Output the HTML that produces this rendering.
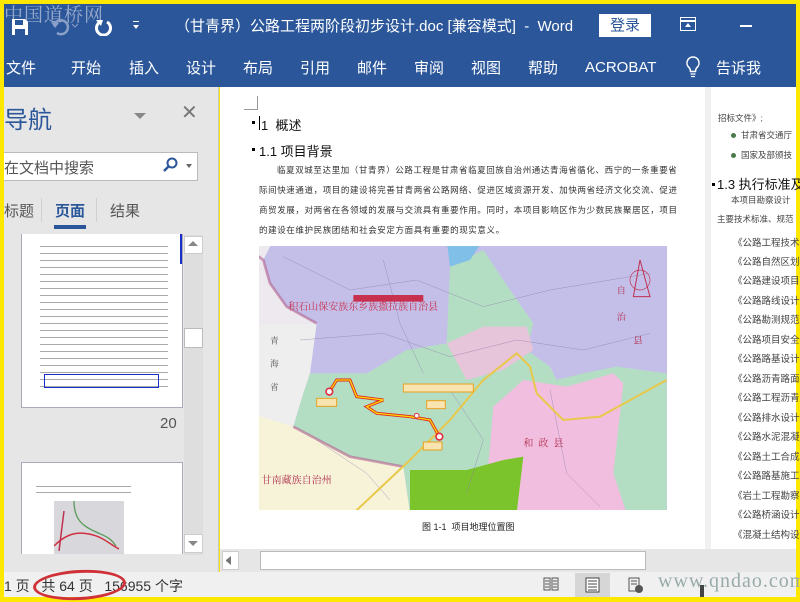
<!DOCTYPE html>
<html><head><meta charset="utf-8"><style>
*{margin:0;padding:0;box-sizing:border-box}
body{width:800px;height:600px;overflow:hidden;background:#ffe800;font-family:"Liberation Sans","Noto Sans CJK SC",sans-serif;position:relative}
.a{position:absolute}
.tab{position:absolute;top:57px;color:#fff;font-size:15px}
.t{position:absolute;font-size:8.5px;color:#333;white-space:nowrap;letter-spacing:0.6px}
.r{position:absolute;left:733px;font-size:9.5px;color:#444;white-space:nowrap}
</style></head><body>
<div class="a" style="left:4px;top:4px;width:792px;height:83px;background:#2b579a"></div>
<div class="a" style="left:4px;top:0;color:#c8cde0;opacity:.7;font-size:19px;font-family:'Liberation Serif','Noto Serif CJK SC',serif;letter-spacing:1px">中国道桥网</div>
<svg class="a" style="left:10px;top:17px" width="20" height="20" viewBox="0 0 20 20"><path d="M2 2h13l3 3v13H2z" fill="#fff"/><rect x="5" y="3" width="8" height="5" fill="#2b579a"/><rect x="5" y="12" width="10" height="6" fill="#2b579a"/></svg>
<svg class="a" style="left:50px;top:18px" width="30" height="18"><path d="M4 8a7 7 0 1 1 3 7" stroke="#8aa0c8" stroke-width="2.5" fill="none"/><path d="M1 4l4 6 4-5z" fill="#8aa0c8"/><path d="M22 6l3 3 3-3" stroke="#8aa0c8" fill="none"/></svg>
<svg class="a" style="left:93px;top:16px" width="20" height="20"><path d="M14 6a7 7 0 1 1-7 0" stroke="#fff" stroke-width="3" fill="none"/><path d="M3 4l7 0-2 6z" fill="#fff"/></svg>
<div class="a" style="left:133px;top:21px;width:6px;height:1px;background:#fff"></div>
<div class="a" style="left:133px;top:25px;border:3px solid transparent;border-top:4px solid #fff"></div>
<div class="a" style="left:175px;top:15px;color:#fff;font-size:15px;white-space:nowrap">（甘青界）公路工程两阶段初步设计.doc [兼容模式] &nbsp;- &nbsp;Word</div>
<div class="a" style="left:599px;top:14px;width:52px;height:23px;background:#fff;color:#2b579a;font-size:15px;text-align:center;line-height:23px">登录</div>
<div class="a" style="left:680px;top:17px;width:16px;height:14px;border:1.5px solid #fff"></div>
<div class="a" style="left:680px;top:20px;width:16px;height:1.5px;background:#fff"></div>
<div class="a" style="left:685px;top:23px;border:3px solid transparent;border-bottom:4px solid #fff;border-top:0"></div>
<div class="a" style="left:740px;top:25px;width:12px;height:1.5px;background:#fff"></div>
<div class="tab" style="left:6px">文件</div>
<div class="tab" style="left:71px">开始</div>
<div class="tab" style="left:129px">插入</div>
<div class="tab" style="left:186px">设计</div>
<div class="tab" style="left:243px">布局</div>
<div class="tab" style="left:300px">引用</div>
<div class="tab" style="left:357px">邮件</div>
<div class="tab" style="left:414px">审阅</div>
<div class="tab" style="left:471px">视图</div>
<div class="tab" style="left:528px">帮助</div>
<div class="tab" style="left:585px;top:59px">ACROBAT</div>
<svg class="a" style="left:684px;top:55px" width="18" height="24"><path d="M9 2a6 6 0 0 0-4 10.5c1 1 1.5 2 1.5 4h5c0-2 .5-3 1.5-4A6 6 0 0 0 9 2z" stroke="#fff" stroke-width="1.5" fill="none"/><path d="M6.5 19h5M7 21.5h4" stroke="#fff" stroke-width="1.3"/></svg>
<div class="tab" style="left:716px">告诉我</div>
<div class="a" style="left:4px;top:87px;width:215px;height:485px;background:#e6e6e6;border-right:1px solid #c8c8c8"></div>
<div class="a" style="left:4px;top:100px;font-size:24px;color:#2b579a">导航</div>
<div class="a" style="left:134px;top:113px;border:6px solid transparent;border-top:6px solid #888"></div>
<div class="a" style="left:181px;top:100px;font-size:20px;color:#777">✕</div>
<div class="a" style="left:4px;top:152px;width:194px;height:29px;background:#fff;border:1px solid #bbb;border-left:0"></div>
<div class="a" style="left:4px;top:157px;font-size:15px;color:#555">在文档中搜索</div>
<svg class="a" style="left:162px;top:157px" width="16" height="16"><circle cx="10" cy="6" r="4.5" stroke="#2b579a" stroke-width="2" fill="none"/><path d="M7 9l-5 5" stroke="#2b579a" stroke-width="2.5"/></svg>
<div class="a" style="left:186px;top:164px;border:3.5px solid transparent;border-top:4px solid #666"></div>
<div class="a" style="left:4px;top:200px;font-size:15px;color:#555">标题</div>
<div class="a" style="left:41px;top:198px;width:1px;height:24px;background:#d0d0d0"></div>
<div class="a" style="left:55px;top:200px;font-size:15px;color:#2b579a;font-weight:bold">页面</div>
<div class="a" style="left:54px;top:225px;width:32px;height:4px;background:#2b579a"></div>
<div class="a" style="left:96px;top:198px;width:1px;height:24px;background:#d0d0d0"></div>
<div class="a" style="left:110px;top:200px;font-size:15px;color:#555">结果</div>
<div class="a" style="left:21px;top:234px;width:162px;height:174px;background:#fff;border:1px solid #aab;border-top:0;overflow:hidden">
<div style="margin:8px 14px 0 18px;height:150px;background:repeating-linear-gradient(#fff 0 4px,#aaa 4px 5px,#fff 5px 7px)"></div>
<div class="a" style="left:22px;top:140px;width:115px;height:14px;border:1.5px solid #1a2ec8"></div>
<div class="a" style="left:158px;top:0;width:3px;height:30px;background:#1a2ec8"></div>
</div>
<div class="a" style="left:160px;top:415px;font-size:15px;color:#555">20</div>
<div class="a" style="left:21px;top:462px;width:162px;height:92px;background:#fff;border:1px solid #aab;border-bottom:0;overflow:hidden">
<div class="a" style="left:14px;top:20px;width:95px;height:12px;background:repeating-linear-gradient(#fff 0 3px,#aaa 3px 4px,#fff 4px 6px)"></div>
<div class="a" style="left:32px;top:38px;width:70px;height:54px;background:#d8d8dc"></div>
<svg class="a" style="left:32px;top:38px" width="70" height="54"><path d="M20 0c0 20 10 25 20 30s15 5 22 15" stroke="#5a9a5a" stroke-width="1.3" fill="none"/><path d="M0 45c10-10 20-15 35-12s20 10 30 15" stroke="#d03040" stroke-width="1.5" fill="none"/><path d="M10 10l-5 40" stroke="#c03050" stroke-width="1.5"/></svg>
</div>
<div class="a" style="left:184px;top:235px;width:19px;height:320px;background:#dedede"></div>
<div class="a" style="left:184px;top:236px;width:19px;height:18px;background:#fff;border:1px solid #ccc"></div>
<div class="a" style="left:188px;top:241px;border:5px solid transparent;border-bottom:5px solid #888;border-top:0"></div>
<div class="a" style="left:184px;top:328px;width:19px;height:20px;background:#fff;border:1px solid #bbb"></div>
<div class="a" style="left:184px;top:534px;width:19px;height:19px;background:#fff;border:1px solid #ccc"></div>
<div class="a" style="left:188px;top:541px;border:5px solid transparent;border-top:5px solid #888"></div>
<div class="a" style="left:220px;top:87px;width:576px;height:470px;background:#fff"></div>
<div class="a" style="left:705px;top:87px;width:6px;height:462px;background:#f0f0f0"></div>
<div class="a" style="left:244px;top:96px;width:14px;height:14px;border-right:1px solid #999;border-bottom:1px solid #999"></div>
<div class="a" style="left:252px;top:121px;width:3px;height:3px;background:#000"></div>
<div class="a" style="left:259px;top:116px;width:1px;height:14px;background:#000"></div>
<div class="a" style="left:261px;top:115px;font-size:13px;color:#111">1 &nbsp;概述</div>
<div class="a" style="left:252px;top:148px;width:3px;height:3px;background:#000"></div>
<div class="a" style="left:259px;top:141px;font-size:13px;color:#111">1.1 项目背景</div>
<div class="t" style="left:277px;top:164px">临夏双城至达里加（甘青界）公路工程是甘肃省临夏回族自治州通达青海省循化、西宁的一条重要省</div>
<div class="t" style="left:259px;top:184px">际间快速通道，项目的建设将完善甘青两省公路网络、促进区域资源开发、加快两省经济文化交流、促进</div>
<div class="t" style="left:259px;top:204px">商贸发展，对两省在各领域的发展与交流具有重要作用。同时，本项目影响区作为少数民族聚居区，项目</div>
<div class="t" style="left:259px;top:224px">的建设在维护民族团结和社会安定方面具有重要的现实意义。</div>
<svg class="a" style="left:259px;top:246px" width="408" height="264" viewBox="0 0 408 264">
<g transform="translate(-9,-6) scale(0.33333)">
<rect x="0" y="0" width="1300" height="820" fill="#c4bfe8"/>
<polygon points="0,0 70,0 40,60 60,130 110,200 200,250 0,250" fill="#ede9ee"/>
<polygon points="30,250 200,250 180,400 160,460 130,560 0,560 0,250" fill="#eeeeee"/>
<polygon points="180,400 350,400 470,330 590,310 600,80 700,30 780,150 850,250 830,330 900,380 920,420 1000,400 1100,380 1250,400 1250,820 480,820 460,680 300,650 130,560 160,460" fill="#b4dec4"/>
<polygon points="730,500 820,420 950,440 1090,400 1120,430 1090,700 1130,820 700,820 720,620" fill="#f2bedf"/>
<polygon points="590,310 700,260 830,260 850,330 760,390 650,420" fill="#e6c4da"/>
<polygon points="0,520 130,560 300,650 460,680 480,820 0,820" fill="#f7f3d8"/>
<polygon points="480,690 650,690 760,660 820,650 800,820 480,820" fill="#7cc42c"/>
<polygon points="590,0 700,0 660,60 600,80" fill="#7fbfe8"/>
<g stroke="#8a7aa8" stroke-width="1.5" fill="none" opacity=".7"><path d="M100 50 300 150 500 120 700 200 900 150 1200 100"/><path d="M150 300 400 280 600 350 800 300 1000 330 1200 280"/><path d="M600 450 700 600 650 760"/><path d="M900 450 950 700 1050 800"/><path d="M200 600 350 700 420 780"/><path d="M400 60 450 250 520 400"/></g>
<path d="M0 30 40 60 60 130 110 200 200 250 M130 560 300 650 460 680" stroke="#b06090" stroke-width="8" fill="none" opacity=".6"/>
<path d="M310 820 480 660 600 540 700 420 800 340 840 380 860 460 940 540 1050 530 1250 420" stroke="#e8c84a" stroke-width="6" fill="none"/>
<path d="M238 455 260 420 300 420 320 470 400 480 350 500 380 520 480 530 540 540 568 590" stroke="#e02020" stroke-width="9" fill="none"/>
<path d="M238 455 260 420 300 420 320 470 400 480 350 500 380 520 480 530 540 540 568 590" stroke="#ffd800" stroke-width="4" fill="none"/>
<circle cx="238" cy="455" r="10" fill="#fff" stroke="#e03040" stroke-width="5"/>
<circle cx="568" cy="590" r="10" fill="#fff" stroke="#e03040" stroke-width="5"/>
<circle cx="500" cy="527" r="7" fill="#fff" stroke="#e03040" stroke-width="3"/>
<rect x="200" y="475" width="60" height="24" fill="#f8e4b0" stroke="#e8a020" stroke-width="3"/>
<rect x="520" y="606" width="56" height="24" fill="#f8e4b0" stroke="#e8a020" stroke-width="3"/>
<rect x="530" y="482" width="56" height="24" fill="#f8e4b0" stroke="#e8a020" stroke-width="3"/>
<rect x="460" y="432" width="210" height="24" fill="#f8e4b0" stroke="#e8a020" stroke-width="3"/>
<rect x="310" y="165" width="210" height="20" fill="#c83050"/>
<text x="115" y="210" font-size="30" fill="#c83050" font-family="Liberation Serif,Noto Serif CJK SC,serif">积石山保安族东乡族撒拉族自治县</text>
<text x="35" y="730" font-size="30" fill="#b03050" font-family="Liberation Serif,Noto Serif CJK SC,serif">甘南藏族自治州</text>
<text x="60" y="310" font-size="26" fill="#555" font-family="Noto Serif CJK SC,serif">青</text>
<text x="60" y="380" font-size="26" fill="#555" font-family="Noto Serif CJK SC,serif">海</text>
<text x="60" y="450" font-size="26" fill="#555" font-family="Noto Serif CJK SC,serif">省</text>
<text x="820" y="620" font-size="30" fill="#b03050" font-family="Noto Serif CJK SC,serif">和 &nbsp;政 &nbsp;县</text>
<text x="1100" y="160" font-size="28" fill="#b03050" font-family="Noto Serif CJK SC,serif">自</text>
<text x="1100" y="240" font-size="28" fill="#b03050" font-family="Noto Serif CJK SC,serif">治</text>
<text x="1150" y="310" font-size="28" fill="#b03050" font-family="Noto Serif CJK SC,serif">县</text>
<path d="M1170 60 1150 170 1200 170z" stroke="#c03050" stroke-width="3" fill="none"/>
<circle cx="1170" cy="120" r="30" stroke="#c03050" stroke-width="2" fill="none"/>
</g></svg>
<div class="a" style="left:422px;top:520px;font-size:9px;color:#222">图 1-1 &nbsp;项目地理位置图</div>
<div class="a" style="left:252px;top:550px;width:3px;height:3px;background:#000"></div>
<div class="r" style="left:718px;top:112px;font-size:8.5px">招标文件》;</div>
<div class="a" style="left:731px;top:133px;width:5px;height:5px;border-radius:50%;background:#4a7a4a"></div>
<div class="r" style="left:741px;top:129px;font-size:8.5px">甘肃省交通厅</div>
<div class="a" style="left:731px;top:153px;width:5px;height:5px;border-radius:50%;background:#4a7a4a"></div>
<div class="r" style="left:741px;top:149px;font-size:8.5px">国家及部颁技</div>
<div class="a" style="left:712px;top:183px;width:3px;height:3px;background:#000"></div>
<div class="r" style="left:717px;top:174px;font-size:13px;color:#111">1.3 执行标准及</div>
<div class="r" style="left:731px;top:194px;font-size:8.5px">本项目勘察设计</div>
<div class="r" style="left:717px;top:213px;font-size:8.5px">主要技术标准、规范</div>
<div class="r" style="top:235px">《公路工程技术标</div>
<div class="r" style="top:254px">《公路自然区划标</div>
<div class="r" style="top:273px">《公路建设项目环</div>
<div class="r" style="top:293px">《公路路线设计规</div>
<div class="r" style="top:312px">《公路勘测规范》</div>
<div class="r" style="top:332px">《公路项目安全性</div>
<div class="r" style="top:351px">《公路路基设计规</div>
<div class="r" style="top:371px">《公路沥青路面设</div>
<div class="r" style="top:390px">《公路工程沥青及</div>
<div class="r" style="top:410px">《公路排水设计规</div>
<div class="r" style="top:429px">《公路水泥混凝土</div>
<div class="r" style="top:449px">《公路土工合成材</div>
<div class="r" style="top:468px">《公路路基施工技</div>
<div class="r" style="top:488px">《岩土工程勘察规</div>
<div class="r" style="top:507px">《公路桥涵设计通</div>
<div class="r" style="top:527px">《混凝土结构设计</div>
<div class="a" style="left:220px;top:549px;width:576px;height:23px;background:#e6e6e6"></div>
<div class="a" style="left:222px;top:551px;width:17px;height:19px;background:#fff;border:1px solid #ccc"></div>
<div class="a" style="left:226px;top:556px;border:4px solid transparent;border-right:5px solid #777;border-left:0;height:9px"></div>
<div class="a" style="left:260px;top:551px;width:386px;height:19px;background:#fff;border:1px solid #bbb"></div>
<div class="a" style="left:4px;top:572px;width:792px;height:25px;background:#f0f0f0"></div>
<div class="a" style="left:4px;top:576px;font-size:14px;color:#333;white-space:nowrap">1 页 &nbsp;&nbsp;共 64 页 &nbsp;&nbsp;156955 个字</div>
<div class="a" style="left:33px;top:570px;width:93px;height:30px;border:3px solid #d03038;border-radius:50%;transform:rotate(-3deg)"></div>
<svg class="a" style="left:543px;top:577px" width="16" height="14"><path d="M1 1h6v12H1zM9 1h6v12H9z" stroke="#555" fill="none"/><path d="M2 4h4M2 7h4M2 10h4M10 4h4M10 7h4M10 10h4" stroke="#555"/></svg>
<div class="a" style="left:575px;top:573px;width:35px;height:24px;background:#d6d6d6"></div>
<svg class="a" style="left:585px;top:577px" width="16" height="16"><rect x="1" y="1" width="13" height="14" stroke="#444" fill="#fff"/><path d="M3 4h9M3 7h9M3 10h9M3 13h9" stroke="#444"/></svg>
<svg class="a" style="left:628px;top:577px" width="16" height="16"><rect x="1" y="1" width="10" height="13" stroke="#555" fill="none"/><path d="M3 4h6M3 7h6" stroke="#555"/><circle cx="11" cy="12" r="4" fill="#555"/></svg>
<div class="a" style="left:658px;top:570px;font-size:20px;color:#9aa;font-family:'Liberation Serif',serif;letter-spacing:1px">www.qndao.com</div>
<div class="a" style="left:700px;top:585px;width:4px;height:12px;background:#444"></div>
</body></html>
